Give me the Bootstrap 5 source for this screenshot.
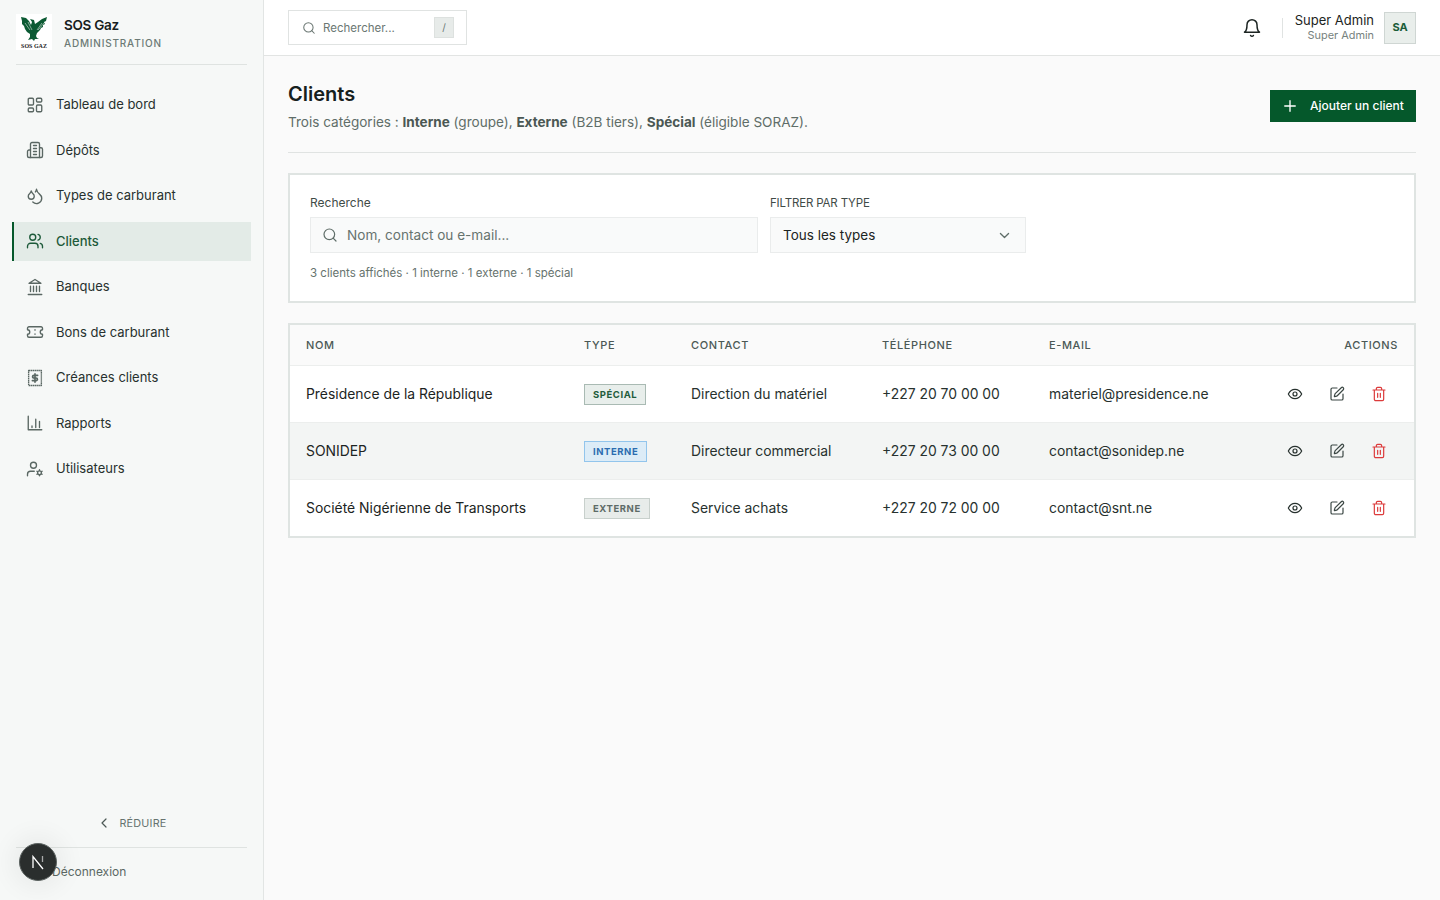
<!DOCTYPE html>
<html lang="fr">
<head>
<meta charset="UTF-8">
<meta name="viewport" content="width=device-width, initial-scale=1.0">
<title>Clients - SOS Gaz</title>
<link rel="stylesheet" href="https://cdn.jsdelivr.net/npm/bootstrap@5.3.0/dist/css/bootstrap.min.css">
<style>
body { font-family: Inter, "Liberation Sans", sans-serif; background: #fafafa; color: #1c2422; font-size: 14px; height: 900px; overflow: hidden; }
svg.ico { fill: none; stroke: currentColor; stroke-width: 1.8; stroke-linecap: round; stroke-linejoin: round; flex: none; }
.side-bar { width: 264px; height: 900px; background: #f6f8f7; border-right: 1px solid #e2e5e4; padding: 0 16px; flex: none; }
.brand-box { height: 65px; border-bottom: 1px solid #dfe3e1; gap: 12px; }
.brand-logo { width: 36px; height: 36px; background: #fff; margin-top: -1px; }
.brand-name { font-size: 13.5px; font-weight: 600; line-height: 20px; color: #16201d; letter-spacing: -.02em; }
.brand-sub { font-size: 10px; letter-spacing: .08em; line-height: 14px; color: #6c7a75; margin-top: 1px; font-weight: 500; }
.side-nav { margin: 20px -4px 0; gap: 6px; }
.side-link { height: 39.5px; padding-left: 12px; gap: 12px; font-size: 13px; color: #27312e; text-decoration: none; border-left: 2px solid transparent; }
.side-link svg { color: #5a6763; }
.side-link.on { background: #e3ebe7; border-left-color: #05582b; color: #1d5a3a; font-weight: 500; }
.side-link.on svg { color: #1d5a3a; }
.reduce-btn { height: 48px; gap: 7px; color: #66736f; font-size: 10.8px; letter-spacing: .02em; }
.reduce-btn span { padding-top: 2px; }
.reduce-btn svg { color: #4b5855; }
.logout-row { border-top: 1px solid #dfe3e1; height: 53px; padding: 0 0 5px 36px; color: #5b6864; font-size: 12px; }
.dev-badge { position: absolute; left: 19px; top: 843px; width: 38px; height: 38px; border-radius: 50%; background: #2a2e2d; border: 1px solid #5c6361; box-shadow: 0 0 24px 8px rgba(0,0,0,.05); }
.top-bar { height: 56px; background: #fff; border-bottom: 1px solid #e2e4e3; padding: 0 24px; }
.top-search { width: 179px; height: 35px; border: 1px solid #e0e3e2; padding: 0 12px 0 13px; gap: 7px; color: #6b7773; font-size: 11.5px; }
.search-hint { padding-top: 2px; }
.kbd-box { width: 20px; height: 21px; background: #e7ebe9; border: 1px solid #dde1df; font-size: 10px; color: #6b7773; margin-left: auto; }
.top-sep { width: 1px; height: 20px; background: #e0e3e2; margin: 0 12px 0 20px; }
.user-name { font-size: 13px; line-height: 15px; color: #1c2422; }
.user-role { font-size: 10.9px; line-height: 14px; color: #76827e; }
.user-av { width: 32px; height: 32px; background: #e9eeeb; border: 1px solid #cfd6d3; color: #1a5c38; font-size: 11px; font-weight: 700; margin-left: 10px; }
.page-body { padding: 24px; }
.page-head { height: 73px; border-bottom: 1px solid #e0e3e2; }
.page-title { font-size: 20px; font-weight: 600; line-height: 28px; margin: 0; color: #16201d; }
.page-sub { font-size: 13.55px; line-height: 20px; margin: 4px 0 0; color: #5f6d68; }
.page-sub b { font-weight: 700; color: #4a5753; }
.add-btn { background: #05582b; color: #fff; height: 32px; width: 146px; border: 0; border-radius: 0; font-size: 12px; font-weight: 500; gap: 11px; padding: 0 0 0 11px; margin-top: 10px; }
.add-btn:hover { background: #05582b; color: #fff; }
.filter-box { margin-top: 20px; height: 130px; background: #fff; border: 2px solid #dfe4e2; padding: 20px; }
.filter-row { gap: 12px; }
.field-label { font-size: 12px; line-height: 16px; color: #3f4b47; margin: 0 0 6px; display: block; }
.field-label.tight { font-size: 11.5px; letter-spacing: -.015em; }
.search-col { width: 448px; }
.field-box { height: 36px; background: #f9fafa; border: 1px solid #eaecec; gap: 9px; padding: 0 11px; color: #5f6d68; }
.field-box input { border: 0; background: transparent; outline: 0; width: 100%; font-size: 13.6px; padding: 0; }
.field-box input::placeholder { color: #66736e; opacity: 1; }
.type-col { width: 256px; }
.type-select { height: 36px; background-color: #f9fafa; border: 1px solid #eaecec; border-radius: 0; font-size: 13.5px; color: #1c2422; padding: 1px 12px 0; background-image: url("data:image/svg+xml,%3csvg xmlns='http://www.w3.org/2000/svg' viewBox='0 0 16 16'%3e%3cpath fill='none' stroke='%235f6d68' stroke-linecap='round' stroke-linejoin='round' stroke-width='1.6' d='m3 5.5 5 5 5-5'/%3e%3c/svg%3e"); background-position: right 14px center; background-size: 13px 13px; }
.count-line { font-size: 11.5px; line-height: 16px; margin-top: 12px; color: #66736e; }
.table-box { margin-top: 20px; background: #fff; border: 2px solid #dfe4e2; }
.client-table { margin: 0; table-layout: fixed; font-size: 13.9px; }
.client-table th { font-size: 11px; font-weight: 500; letter-spacing: .055em; color: #4b5855; height: 40px; padding: 0 16px; vertical-align: middle; background: #fafafa; border-bottom: 1px solid #eceeed; }
.client-table td { height: 57px; padding: 2px 16px 0; vertical-align: middle; color: #27312e; background: transparent; border-bottom: 1px solid #eceeed; }
.client-table tr:last-child td { border-bottom: 0; }
.client-table tr.alt td { background: #f3f5f4; }
.client-table td:first-child { color: #1c2422; }
.col-a { width: 278px; } .col-b { width: 107px; } .col-c { width: 191px; } .col-d { width: 167px; } .col-e { width: 223px; }
.type-tag { display: block; width: fit-content; font-size: 9.5px; font-weight: 700; letter-spacing: .06em; line-height: 19px; padding: 0 8px; border: 1px solid; }
.tag-spe { background: #e8eeeb; border-color: #a9bab3; color: #1f5c3c; }
.tag-int { background: #dcecf7; border-color: #92c5ec; color: #2b6cb0; }
.tag-ext { background: #e8ecea; border-color: #c8d0cc; color: #5e6b67; }
.act-row { gap: 26px; margin: -2px 11px 0 0; }
.act-eye { color: #27312e; } .act-pen { color: #3b4744; } .act-del { color: #dc3b3b; }
</style>
</head>
<body>
<div class="d-flex">
  <aside class="side-bar d-flex flex-column">
    <div class="brand-box d-flex align-items-center">
      <svg class="brand-logo" viewBox="0 0 36 36">
        <path fill="#0b5a33" d="M5 3l5 1 3 3 2 4 1-3-2-3 4 1 1 4 3-2 4-3 5-2-1 4-2 1 1 2-2 1 0 2-2 1-1 2-3 3-1 3 1 2 2 1-4 0-1 2-2-2-4 1 2-3 0-3-3-2-2-3-1-3-2-2 0-3z"/>
        <path stroke="#fff" stroke-width=".5" fill="none" d="M9 9l5 7M12 8l4 8M26 9l-5 7M29 8l-7 8"/>
        <text x="18" y="33.5" text-anchor="middle" font-family="Liberation Serif, serif" font-size="6" font-weight="700" fill="#222">SOS GAZ</text>
      </svg>
      <div>
        <div class="brand-name">SOS Gaz</div>
        <div class="brand-sub">ADMINISTRATION</div>
      </div>
    </div>
    <nav class="side-nav d-flex flex-column">
      <a class="side-link d-flex align-items-center" href="#"><svg class="ico" width="18" height="18" viewBox="0 0 24 24"><rect x="3" y="3" width="7" height="9" rx="1.5"/><rect x="14" y="3" width="7" height="5" rx="1.5"/><rect x="14" y="12" width="7" height="9" rx="1.5"/><rect x="3" y="16" width="7" height="5" rx="1.5"/></svg>Tableau de bord</a>
      <a class="side-link d-flex align-items-center" href="#"><svg class="ico" width="18" height="18" viewBox="0 0 24 24"><path d="M6 22V4a2 2 0 0 1 2-2h8a2 2 0 0 1 2 2v18Z"/><path d="M6 12H4a2 2 0 0 0-2 2v6a2 2 0 0 0 2 2h2"/><path d="M18 9h2a2 2 0 0 1 2 2v9a2 2 0 0 1-2 2h-2"/><path d="M10 6h4M10 10h4M10 14h4M10 18h4"/></svg>Dépôts</a>
      <a class="side-link d-flex align-items-center" href="#"><svg class="ico" width="18" height="18" viewBox="0 0 24 24"><path d="M7 16.3c2.2 0 4-1.83 4-4.05 0-1.16-.57-2.26-1.71-3.19S7.29 6.75 7 5.3c-.29 1.45-1.14 2.84-2.29 3.76S3 11.1 3 12.25c0 2.22 1.8 4.05 4 4.05z"/><path d="M12.56 6.6A10.97 10.97 0 0 0 14 3.02c.5 2.5 2 4.9 4 6.5s3 3.5 3 5.5a6.98 6.98 0 0 1-11.91 4.97"/></svg>Types de carburant</a>
      <a class="side-link on d-flex align-items-center" href="#"><svg class="ico" width="18" height="18" viewBox="0 0 24 24"><path d="M16 21v-2a4 4 0 0 0-4-4H6a4 4 0 0 0-4 4v2"/><circle cx="9" cy="7" r="4"/><path d="M22 21v-2a4 4 0 0 0-3-3.87"/><path d="M16 3.13a4 4 0 0 1 0 7.75"/></svg>Clients</a>
      <a class="side-link d-flex align-items-center" href="#"><svg class="ico" width="18" height="18" viewBox="0 0 24 24"><path d="M3 22h18M6 18v-7M10 18v-7M14 18v-7M18 18v-7"/><path d="M12 2l8 5H4z"/></svg>Banques</a>
      <a class="side-link d-flex align-items-center" href="#"><svg class="ico" width="18" height="18" viewBox="0 0 24 24"><path d="M2 9a3 3 0 0 1 0 6v2a2 2 0 0 0 2 2h16a2 2 0 0 0 2-2v-2a3 3 0 0 1 0-6V7a2 2 0 0 0-2-2H4a2 2 0 0 0-2 2Z"/><path d="M12 9v.5M12 14.5v.5"/></svg>Bons de carburant</a>
      <a class="side-link d-flex align-items-center" href="#"><svg class="ico" width="18" height="18" viewBox="0 0 24 24"><path d="M3.5 2h17v20h-17z" stroke-dasharray="2 .6" stroke-linecap="butt"/><path d="M15.5 8.5h-5a1.75 1.75 0 0 0 0 3.5h3a1.75 1.75 0 0 1 0 3.5h-5M12 6.5v11" stroke-width="2.2"/></svg>Créances clients</a>
      <a class="side-link d-flex align-items-center" href="#"><svg class="ico" width="18" height="18" viewBox="0 0 24 24"><path d="M3 3v18h18"/><path d="M8 18v-2M13 18V7M18 18V10"/></svg>Rapports</a>
      <a class="side-link d-flex align-items-center" href="#"><svg class="ico" width="18" height="18" viewBox="0 0 24 24"><circle cx="10" cy="7" r="4"/><path d="M2 21v-2a4 4 0 0 1 4-4h5"/><circle cx="18" cy="17" r="2.5"/><path d="M18 13v1M18 20v1M14.5 15l.9.5M20.6 18.5l.9.5M14.5 19l.9-.5M20.6 15.5l.9-.5"/></svg>Utilisateurs</a>
    </nav>
    <div class="mt-auto">
      <div class="reduce-btn d-flex align-items-center justify-content-center"><svg class="ico" width="16" height="16" viewBox="0 0 24 24"><path d="M15 18l-6-6 6-6"/></svg><span>RÉDUIRE</span></div>
      <div class="logout-row d-flex align-items-center">Déconnexion</div>
    </div>
  </aside>
  <div class="flex-grow-1">
    <header class="top-bar d-flex align-items-center justify-content-between">
      <div class="top-search d-flex align-items-center">
        <svg class="ico" width="14" height="14" viewBox="0 0 24 24"><circle cx="11" cy="11" r="8"/><path d="M21 21l-4.3-4.3"/></svg>
        <span class="search-hint">Rechercher...</span>
        <span class="kbd-box d-flex align-items-center justify-content-center">/</span>
      </div>
      <div class="d-flex align-items-center">
        <svg class="ico" width="20" height="20" viewBox="0 0 24 24"><path d="M6 8a6 6 0 0 1 12 0c0 7 3 9 3 9H3s3-2 3-9"/><path d="M10.3 21a1.94 1.94 0 0 0 3.4 0"/></svg>
        <span class="top-sep"></span>
        <div class="text-end">
          <div class="user-name">Super Admin</div>
          <div class="user-role">Super Admin</div>
        </div>
        <div class="user-av d-flex align-items-center justify-content-center">SA</div>
      </div>
    </header>
    <main class="page-body">
      <div class="page-head d-flex justify-content-between align-items-start">
        <div>
          <h1 class="page-title">Clients</h1>
          <p class="page-sub">Trois catégories : <b>Interne</b> (groupe), <b>Externe</b> (B2B tiers), <b>Spécial</b> (éligible SORAZ).</p>
        </div>
        <button class="btn add-btn d-flex align-items-center" type="button"><svg class="ico" width="18" height="18" viewBox="0 0 24 24"><path d="M5 12h14M12 5v14"/></svg>Ajouter un client</button>
      </div>
      <section class="filter-box">
        <div class="filter-row d-flex">
          <div class="search-col">
            <label class="field-label">Recherche</label>
            <div class="field-box d-flex align-items-center">
              <svg class="ico" width="16" height="16" viewBox="0 0 24 24"><circle cx="11" cy="11" r="8"/><path d="M21 21l-4.3-4.3"/></svg>
              <input type="text" placeholder="Nom, contact ou e-mail...">
            </div>
          </div>
          <div class="type-col">
            <label class="field-label tight">FILTRER PAR TYPE</label>
            <select class="form-select type-select"><option>Tous les types</option></select>
          </div>
        </div>
        <div class="count-line">3 clients affichés · 1 interne · 1 externe · 1 spécial</div>
      </section>
      <section class="table-box">
        <table class="table client-table">
          <colgroup><col class="col-a"><col class="col-b"><col class="col-c"><col class="col-d"><col class="col-e"><col></colgroup>
          <thead>
            <tr><th>NOM</th><th>TYPE</th><th>CONTACT</th><th>TÉLÉPHONE</th><th>E-MAIL</th><th class="text-end">ACTIONS</th></tr>
          </thead>
          <tbody>
            <tr>
              <td>Présidence de la République</td><td><span class="type-tag tag-spe">SPÉCIAL</span></td><td>Direction du matériel</td><td>+227 20 70 00 00</td><td>materiel@presidence.ne</td>
              <td><div class="act-row d-flex justify-content-end">
                <svg class="ico act-eye" width="16" height="16" viewBox="0 0 24 24"><path d="M2 12s3.5-7 10-7 10 7 10 7-3.5 7-10 7-10-7-10-7Z"/><circle cx="12" cy="12" r="3"/></svg>
                <svg class="ico act-pen" width="16" height="16" viewBox="0 0 24 24"><path d="M12 3H5a2 2 0 0 0-2 2v14a2 2 0 0 0 2 2h14a2 2 0 0 0 2-2v-7"/><path d="M18.4 2.6a1 1 0 0 1 3 3l-9 9a2 2 0 0 1-.9.5l-2.9.8a.5.5 0 0 1-.6-.6l.8-2.9a2 2 0 0 1 .5-.9z"/></svg>
                <svg class="ico act-del" width="16" height="16" viewBox="0 0 24 24"><path d="M3 6h18M19 6v14c0 1-1 2-2 2H7c-1 0-2-1-2-2V6M8 6V4c0-1 1-2 2-2h4c1 0 2 1 2 2v2M10 11v6M14 11v6"/></svg>
              </div></td>
            </tr>
            <tr class="alt">
              <td>SONIDEP</td><td><span class="type-tag tag-int">INTERNE</span></td><td>Directeur commercial</td><td>+227 20 73 00 00</td><td>contact@sonidep.ne</td>
              <td><div class="act-row d-flex justify-content-end">
                <svg class="ico act-eye" width="16" height="16" viewBox="0 0 24 24"><path d="M2 12s3.5-7 10-7 10 7 10 7-3.5 7-10 7-10-7-10-7Z"/><circle cx="12" cy="12" r="3"/></svg>
                <svg class="ico act-pen" width="16" height="16" viewBox="0 0 24 24"><path d="M12 3H5a2 2 0 0 0-2 2v14a2 2 0 0 0 2 2h14a2 2 0 0 0 2-2v-7"/><path d="M18.4 2.6a1 1 0 0 1 3 3l-9 9a2 2 0 0 1-.9.5l-2.9.8a.5.5 0 0 1-.6-.6l.8-2.9a2 2 0 0 1 .5-.9z"/></svg>
                <svg class="ico act-del" width="16" height="16" viewBox="0 0 24 24"><path d="M3 6h18M19 6v14c0 1-1 2-2 2H7c-1 0-2-1-2-2V6M8 6V4c0-1 1-2 2-2h4c1 0 2 1 2 2v2M10 11v6M14 11v6"/></svg>
              </div></td>
            </tr>
            <tr>
              <td>Société Nigérienne de Transports</td><td><span class="type-tag tag-ext">EXTERNE</span></td><td>Service achats</td><td>+227 20 72 00 00</td><td>contact@snt.ne</td>
              <td><div class="act-row d-flex justify-content-end">
                <svg class="ico act-eye" width="16" height="16" viewBox="0 0 24 24"><path d="M2 12s3.5-7 10-7 10 7 10 7-3.5 7-10 7-10-7-10-7Z"/><circle cx="12" cy="12" r="3"/></svg>
                <svg class="ico act-pen" width="16" height="16" viewBox="0 0 24 24"><path d="M12 3H5a2 2 0 0 0-2 2v14a2 2 0 0 0 2 2h14a2 2 0 0 0 2-2v-7"/><path d="M18.4 2.6a1 1 0 0 1 3 3l-9 9a2 2 0 0 1-.9.5l-2.9.8a.5.5 0 0 1-.6-.6l.8-2.9a2 2 0 0 1 .5-.9z"/></svg>
                <svg class="ico act-del" width="16" height="16" viewBox="0 0 24 24"><path d="M3 6h18M19 6v14c0 1-1 2-2 2H7c-1 0-2-1-2-2V6M8 6V4c0-1 1-2 2-2h4c1 0 2 1 2 2v2M10 11v6M14 11v6"/></svg>
              </div></td>
            </tr>
          </tbody>
        </table>
      </section>
    </main>
  </div>
</div>
<div class="dev-badge d-flex align-items-center justify-content-center"><svg width="16" height="16" viewBox="0 0 16 16" fill="none" stroke="#fff" stroke-width="1.3"><path d="M3 14V2.5l10 12.5"/><path d="M12.5 2v6" stroke-opacity=".6"/></svg></div>
</body>
</html>
